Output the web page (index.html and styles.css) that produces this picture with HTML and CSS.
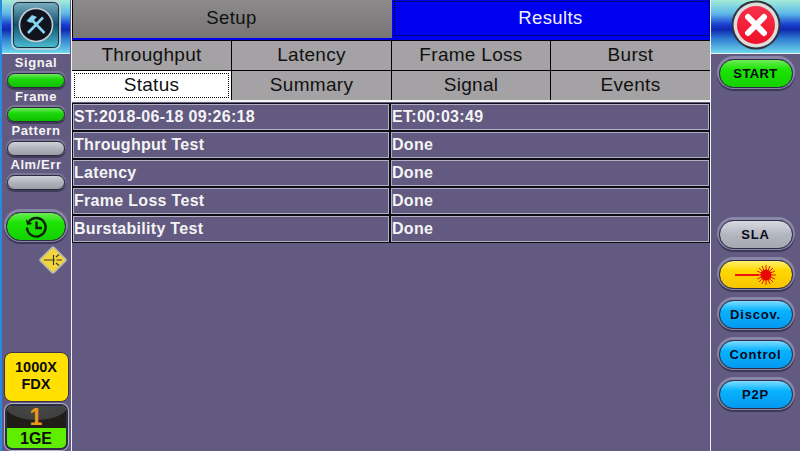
FILE: index.html
```html
<!DOCTYPE html>
<html lang="en">
<head>
  <meta charset="UTF-8" />
  <title>Results - Status</title>
  <link rel="stylesheet" href="styles.css">
</head>
<body>

<!-- Left sidebar -->
<div class="sidebar left">
  <div class="header">
    <svg class="logo" width="50" height="50" viewBox="0 0 50 50">
      <defs>
        <linearGradient id="tile" x1="0" y1="0" x2="0" y2="1">
          <stop offset="0" stop-color="#7fb4c4"/>
          <stop offset="0.5" stop-color="#12506e"/>
          <stop offset="1" stop-color="#4fc4d8"/>
        </linearGradient>
      </defs>
      <rect x="1" y="1" width="48" height="48" rx="6" fill="url(#tile)" stroke="#c4d2d8" stroke-width="1.6"/>
      <rect x="2.5" y="2.5" width="45" height="45" rx="5" fill="none" stroke="#16303c" stroke-width="1"/>
      <circle cx="25" cy="25" r="16.5" fill="#10141e" stroke="#c8ced4" stroke-width="1.6"/>
      <path d="M17 33 L32 17.5 M19 18 L33.5 33" stroke="#86d4f0" stroke-width="2.6" fill="none"/>
      <path d="M15.5 21 L21 15 L26 17 L20 23 Z" fill="#86d4f0"/>
    </svg>
  </div>
  <div class="label">Signal</div>
  <div class="led green"></div>
  <div class="label">Frame</div>
  <div class="led green"></div>
  <div class="label">Pattern</div>
  <div class="led gray"></div>
  <div class="label">Alm/Err</div>
  <div class="led gray"></div>

  <div class="pill green history">
    <svg width="24" height="24" viewBox="0 0 24 24" fill="none" stroke="#0c2208" stroke-width="2.4">
      <path d="M5 6.5 A9.3 9.3 0 1 1 3 12.5"/>
      <path d="M2 4.5 L3 10 L8.5 9 Z" fill="#0c2208" stroke="none"/>
      <path d="M12.5 6.5 V13 H18"/>
    </svg>
  </div>
  <svg class="warn" width="28" height="28" viewBox="0 0 28 28">
    <rect x="4.5" y="4.5" width="19" height="19" rx="1.5" transform="rotate(45 14 14)" fill="#f4d63c" stroke="#b8b8b0" stroke-width="1.6"/>
    <path d="M5 14 H16 M14.500 9 V19 M17 11 L20 8.500 M17 17 L20 19.500 M17.500 14 H23" stroke="#3a3a30" stroke-width="1.200" fill="none"/>
  </svg>

  <div class="spacer"></div>
  <div class="mode">1000X<br>FDX</div>
  <div class="port">
    <div class="port-num">1</div>
    <div class="port-name">1GE</div>
  </div>
</div>

<!-- Main content -->
<div class="main">
  <div class="tabs-top">
    <div class="tab-top">Setup</div>
    <div class="tab-top active"><span class="focus">Results</span></div>
  </div>
  <div class="tabs-sub">
    <div class="tab">Throughput</div>
    <div class="tab">Latency</div>
    <div class="tab">Frame Loss</div>
    <div class="tab">Burst</div>
    <div class="tab selected"><span class="focus">Status</span></div>
    <div class="tab">Summary</div>
    <div class="tab">Signal</div>
    <div class="tab">Events</div>
  </div>
  <div class="results">
    <div class="cell">ST:2018-06-18 09:26:18</div>
    <div class="cell">ET:00:03:49</div>
    <div class="cell">Throughput Test</div>
    <div class="cell">Done</div>
    <div class="cell">Latency</div>
    <div class="cell">Done</div>
    <div class="cell">Frame Loss Test</div>
    <div class="cell">Done</div>
    <div class="cell">Burstability Test</div>
    <div class="cell">Done</div>
  </div>
</div>

<!-- Right sidebar -->
<div class="sidebar right">
  <div class="header">
    <svg class="close" width="50" height="50" viewBox="0 0 50 50">
      <defs>
        <linearGradient id="red" x1="0" y1="0" x2="0" y2="1">
          <stop offset="0" stop-color="#f83048"/>
          <stop offset="1" stop-color="#ee1028"/>
        </linearGradient>
      </defs>
      <circle cx="25" cy="25" r="24.500" fill="#30343c"/>
      <circle cx="25" cy="25" r="22.500" fill="#dcdcdc"/>
      <circle cx="25" cy="25" r="19" fill="url(#red)"/>
      <path d="M17 17 L33 33 M33 17 L17 33" stroke="#fff" stroke-width="6" stroke-linecap="round"/>
    </svg>
  </div>
  <div class="pill green action start">START</div>
  <div class="spacer"></div>
  <div class="pill gray action">SLA</div>
  <div class="pill yellow action">
    <svg width="42" height="24" viewBox="0 0 42 24" stroke="#f01010" fill="none">
      <path d="M0 12 H24" stroke-width="2"/>
      <path d="M31 2 V22 M21 12 H41 M24 5 L38 19 M38 5 L24 19 M27 3 L35 21 M35 3 L27 21 M22 8 L40 16 M40 8 L22 16" stroke-width="1"/>
      <circle cx="31" cy="12" r="5.500" fill="#e80808" stroke="none"/>
    </svg>
  </div>
  <div class="pill blue action">Discov.</div>
  <div class="pill blue action">Control</div>
  <div class="pill blue action">P2P</div>
</div>

</body>
</html>
```

FILE: styles.css
```css
* {
  margin: 0;
  padding: 0;
  box-sizing: border-box;
}

body {
  width: 800px;
  height: 451px;
  overflow: hidden;
  display: flex;
  font-family: 'Liberation Sans', Arial, sans-serif;
  background: #625a80;
}

.sidebar {
  display: flex;
  flex-direction: column;
  align-items: center;
  height: 451px;
  background: #625a80;
}

.sidebar.left {
  width: 72px;
  border-left: 2px solid #2a8ae0;
  border-right: 1px solid #f0f0f8;
  padding-right: 1px;
}

.sidebar.right {
  width: 90px;
  border-left: 1px solid #f0f0f8;
}

.header {
  flex: none;
  align-self: stretch;
  height: 54px;
  display: flex;
  align-items: center;
  justify-content: center;
  padding-bottom: 3px;
  border-bottom: 1px solid #e8f4f8;
  background: linear-gradient(to bottom, #a4ecd8 0%, #5cb8e8 26%, #1a40d0 46%, #1028b0 56%, #2c78d0 72%, #70d8ec 100%);
}

.label {
  height: 19px;
  line-height: 18px;
  font-size: 13px;
  font-weight: bold;
  color: #f4f4f4;
  text-align: center;
  letter-spacing: 0.6px;
}

.led {
  width: 58px;
  height: 15px;
  border-radius: 8px;
  border: 1px solid #2a2a3c;
  box-shadow: 0 -1px 0 1px #7c7698, 0 1px 0 1px #403c58;
}

.led.green {
  background: linear-gradient(to bottom, #70e860 0%, #1cd80c 40%, #10c000 100%);
}

.led.gray {
  background: linear-gradient(to bottom, #d0d2d8 0%, #b0b2bc 50%, #9c9ea8 100%);
}

.pill {
  display: flex;
  align-items: center;
  justify-content: center;
  border-radius: 15px;
  border: 1px solid #2c2c44;
  box-shadow: 0 -1px 0 2px #8a86a8, 0 1px 0 2px #3a3856;
  font-size: 13px;
  font-weight: bold;
  color: #08081c;
  letter-spacing: 0.8px;
}

.pill.green {
  background: linear-gradient(to bottom, #70ec58 0%, #1ce404 35%, #14d000 100%);
}

.pill.gray {
  background: linear-gradient(to bottom, #d8dae0 0%, #b4b6c0 50%, #a4a6b0 100%);
}

.pill.yellow {
  background: linear-gradient(to bottom, #fff070 0%, #ffd800 35%, #f8c400 100%);
}

.pill.blue {
  background: linear-gradient(to bottom, #80dcff 0%, #08b4ff 35%, #0498f0 100%);
}

.history {
  width: 60px;
  height: 29px;
  margin-top: 22px;
}

.warn {
  margin-top: 5px;
  margin-left: 34px;
  flex: none;
}

.spacer {
  flex: 1;
}

.mode {
  width: 65px;
  height: 50px;
  flex: none;
  padding-top: 6px;
  border: 1px solid #38344c;
  border-radius: 8px;
  background: #ffe000;
  color: #0c0c0c;
  font-size: 14.500px;
  line-height: 17px;
  font-weight: bold;
  text-align: center;
}

.port {
  width: 63px;
  height: 46px;
  flex: none;
  margin-top: 2px;
  margin-bottom: 1px;
  border: 2px solid #2c2c44;
  border-radius: 7px;
  box-shadow: 0 0 0 1px #b4b0c8;
  overflow: hidden;
  background: #60ee00;
}

.port-num {
  height: 22px;
  line-height: 23px;
  font-size: 23px;
  font-weight: bold;
  color: #e8981c;
  text-align: center;
  background: radial-gradient(ellipse 75% 90% at 50% 0, #484848 0%, #404040 68%, #201c18 72%);
}

.port-name {
  line-height: 21px;
  font-size: 16px;
  font-weight: bold;
  color: #0c0c0c;
  text-align: center;
}

.main {
  width: 638px;
  height: 451px;
  flex: none;
  display: flex;
  flex-direction: column;
}

.tabs-top {
  display: grid;
  grid-template-columns: 319px 319px;
  height: 40px;
  padding-left: 1px;
  border-bottom: 2px solid #0000f0;
  background: #000;
}

.tab-top {
  display: flex;
  align-items: center;
  justify-content: center;
  padding: 0 2px 2px 0;
  font-size: 18.500px;
  letter-spacing: 0.4px;
  color: #111;
  background: linear-gradient(to bottom, #8c8a8a, #767474);
}

.tab-top.active {
  padding: 1px 1px 2px 2px;
  background: #0000f0;
  color: #f0f0ff;
}

.tab-top.active .focus {
  border: 1px dotted #000;
  padding: 0 3px 2px 0;
}

.focus {
  flex: 1;
  align-self: stretch;
  display: flex;
  align-items: center;
  justify-content: center;
}

.tabs-sub {
  display: grid;
  grid-template-columns: 159px 159px 158px 159px;
  grid-auto-rows: 29px;
  gap: 1px;
  height: 62px;
  padding-top: 1px;
  background: #000;
  border-bottom: 2px solid #f4f4f4;
}

.tab {
  display: flex;
  align-items: center;
  justify-content: center;
  padding-bottom: 2px;
  font-size: 19px;
  letter-spacing: 0.3px;
  color: #111;
  background: #a4a2a4;
}

.tab.selected {
  padding: 2px;
  background: #fff;
}

.tab.selected .focus {
  border: 1px dotted #000;
  padding-bottom: 1px;
}

.results {
  display: grid;
  grid-template-columns: 318px 320px;
  grid-auto-rows: 28px;
  padding-top: 1px;
}

.cell {
  display: flex;
  align-items: center;
  padding-left: 1px;
  border: 1px solid #b0aec0;
  outline: 1px solid #0c0c14;
  outline-offset: -1px;
  box-shadow: inset 0 0 0 1px #b0aec0;
  font-size: 16px;
  font-weight: bold;
  color: #f4f4f4;
  letter-spacing: 0.3px;
}

.action {
  flex: none;
  width: 74px;
  height: 29px;
  margin-bottom: 11px;
}

.action.start {
  margin-top: 5px;
  letter-spacing: 0.4px;
}

.right .action:last-child {
  margin-bottom: 42px;
}
```
